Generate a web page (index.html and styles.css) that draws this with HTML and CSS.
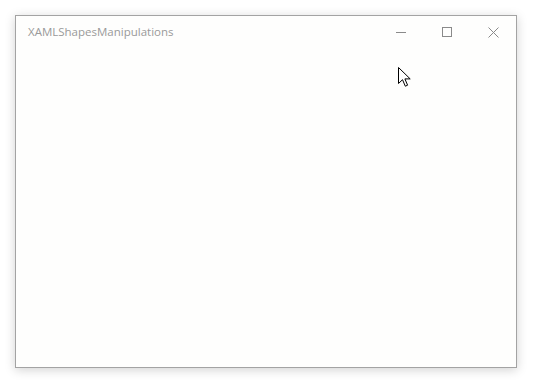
FILE: index.html
```html
<!DOCTYPE html>
<html>
<head>
<meta charset="utf-8">
<link rel="stylesheet" href="styles.css">
</head>
<body>
<div class="window">
  <div class="titlebar">
    <span class="title">XAMLShapesManipulations</span>
    <div class="controls">
      <span class="btn"><svg width="10" height="10" viewBox="0 0 10 10"><path d="M0 5.5H10" stroke="#8a8a8a" stroke-width="1"/></svg></span>
      <span class="btn"><svg width="10" height="10" viewBox="0 0 10 10"><rect x="0.5" y="0.5" width="9" height="9" fill="none" stroke="#8a8a8a" stroke-width="1"/></svg></span>
      <span class="btn"><svg width="11" height="11" viewBox="0 0 11 11"><path d="M0.5 0.5L10.5 10.5M10.5 0.5L0.5 10.5" stroke="#8a8a8a" stroke-width="1"/></svg></span>
    </div>
  </div>
  <div class="content">
    <svg class="cursor" width="13" height="21" viewBox="0 0 13 21"><path d="M0.5 0.5V16.5L4.5 12.7L7.3 19.2L9.6 18.2L6.9 11.9H12.2Z" fill="#fff" stroke="#000" stroke-width="1" stroke-linejoin="miter"/></svg>
  </div>
</div>
</body>
</html>
```
FILE: styles.css
```css
html, body {
  margin: 0;
  padding: 0;
  background: #ffffff;
}
body {
  width: 534px;
  height: 384px;
  padding: 15px 0 0 15px;
  box-sizing: border-box;
}
.window {
  width: 502px;
  height: 353px;
  box-sizing: border-box;
  border: 1px solid #a3a3a3;
  background: #fefefd;
  box-shadow: 0 2px 10px rgba(0,0,0,0.18);
  display: flex;
  flex-direction: column;
}
.titlebar {
  height: 32px;
  display: flex;
  align-items: center;
  justify-content: space-between;
}
.title {
  font-family: "Open Sans", "Noto Sans", sans-serif;
  font-size: 11.5px;
  color: #9a9a9a;
  padding-left: 12px;
  margin-top: -2px;
}
.controls {
  display: flex;
  height: 32px;
}
.btn {
  width: 46px;
  height: 32px;
  display: flex;
  align-items: center;
  justify-content: center;
}
.content {
  flex: 1;
  position: relative;
}
.cursor {
  position: absolute;
  left: 382px;
  top: 19px;
}
```
